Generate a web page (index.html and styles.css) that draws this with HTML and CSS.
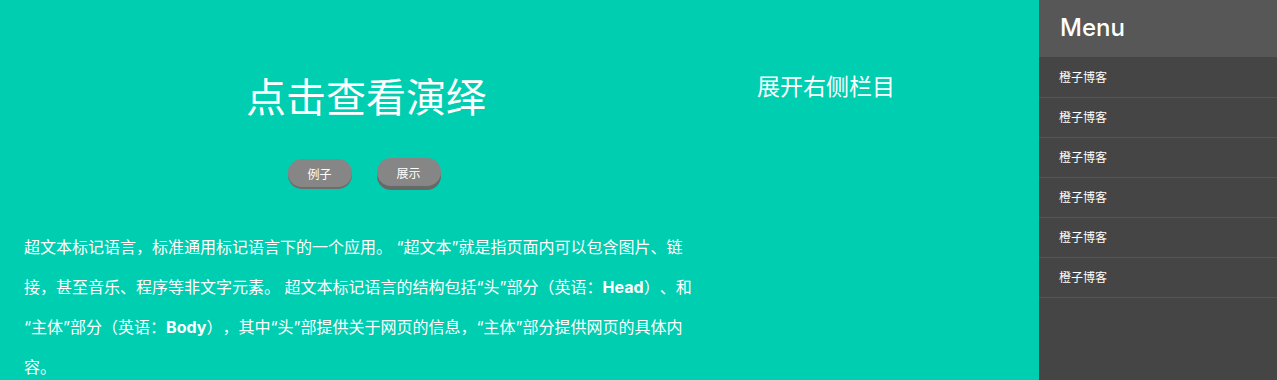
FILE: index.html
```html
<!DOCTYPE html>
<html lang="zh-CN">
<head>
<meta charset="utf-8">
<title>点击查看演绎</title>
<link rel="stylesheet" href="styles.css">
</head>
<body>
<div class="page">
  <main class="main">
    <section class="content">
      <h1 class="title">点击查看演绎</h1>
      <div class="buttons">
        <button class="btn">例子</button>
        <button class="btn btn-raised">展示</button>
      </div>
      <p class="text">超文本标记语言，标准通用标记语言下的一个应用。 “超文本”就是指页面内可以包含图片、链接，甚至音乐、程序等非文字元素。 超文本标记语言的结构包括“头”部分（英语：<b>Head</b>）、和“主体”部分（英语：<b>Body</b>），其中“头”部提供关于网页的信息，“主体”部分提供网页的具体内容。</p>
    </section>
    <aside class="side-link">
      <h2 class="side-title">展开右侧栏目</h2>
    </aside>
  </main>
  <nav class="menu">
    <div class="menu-head">Menu</div>
    <ul class="menu-list">
      <li class="menu-item">橙子博客</li>
      <li class="menu-item">橙子博客</li>
      <li class="menu-item">橙子博客</li>
      <li class="menu-item">橙子博客</li>
      <li class="menu-item">橙子博客</li>
      <li class="menu-item">橙子博客</li>
    </ul>
  </nav>
</div>
</body>
</html>
```

FILE: styles.css
```css
html, body {
  margin: 0;
  padding: 0;
  height: 100%;
}
body {
  background: #00ceb1;
  color: #fff;
  font-family: Inter, "Noto Sans CJK SC", sans-serif;
  overflow: hidden;
  text-spacing-trim: space-all;
}
.page {
  display: flex;
  height: 380px;
}
.main {
  flex: 1;
  display: flex;
  align-items: flex-start;
}
.content {
  width: 684px;
  padding: 0 24px;
  flex: none;
}
.title {
  margin: 71px 0 0;
  text-align: center;
  font-family: "Noto Sans CJK SC", sans-serif;
  font-weight: 400;
  font-size: 40px;
  line-height: 48px;
}
.buttons {
  display: flex;
  justify-content: center;
  gap: 25px;
  margin-top: 39px;
  padding-right: 4px;
  height: 32px;
  align-items: flex-start;
}
.btn {
  width: 64px;
  height: 28px;
  border: none;
  border-radius: 14px;
  background: #868686;
  color: #fff;
  font-family: Inter, "Noto Sans CJK SC", sans-serif;
  font-size: 12px;
  padding: 0;
  box-shadow: 0 2px 0 #6d6d6d;
  margin-top: 1px;
}
.btn-raised {
  margin-top: 0;
  box-shadow: 0 4px 0 #686868;
}
.text {
  margin: 37px 0 0;
  width: 668px;
  font-size: 16px;
  line-height: 40px;
}
.text b {
  font-weight: 700;
}
.side-link {
  padding-left: 25px;
}
.side-title {
  margin: 72px 0 0;
  font-weight: normal;
  font-size: 23px;
  line-height: 30px;
}
.menu {
  width: 238px;
  flex: none;
  background: #454545;
}
.menu-head {
  height: 57px;
  background: #575757;
  padding-left: 21px;
  font-size: 24px;
  font-weight: 500;
  line-height: 56px;
}
.menu-list {
  list-style: none;
  margin: 0;
  padding: 1px 0 0;
}
.menu-item {
  height: 39px;
  line-height: 39px;
  padding-left: 20px;
  font-size: 12px;
  border-bottom: 1px solid #555;
}
```
